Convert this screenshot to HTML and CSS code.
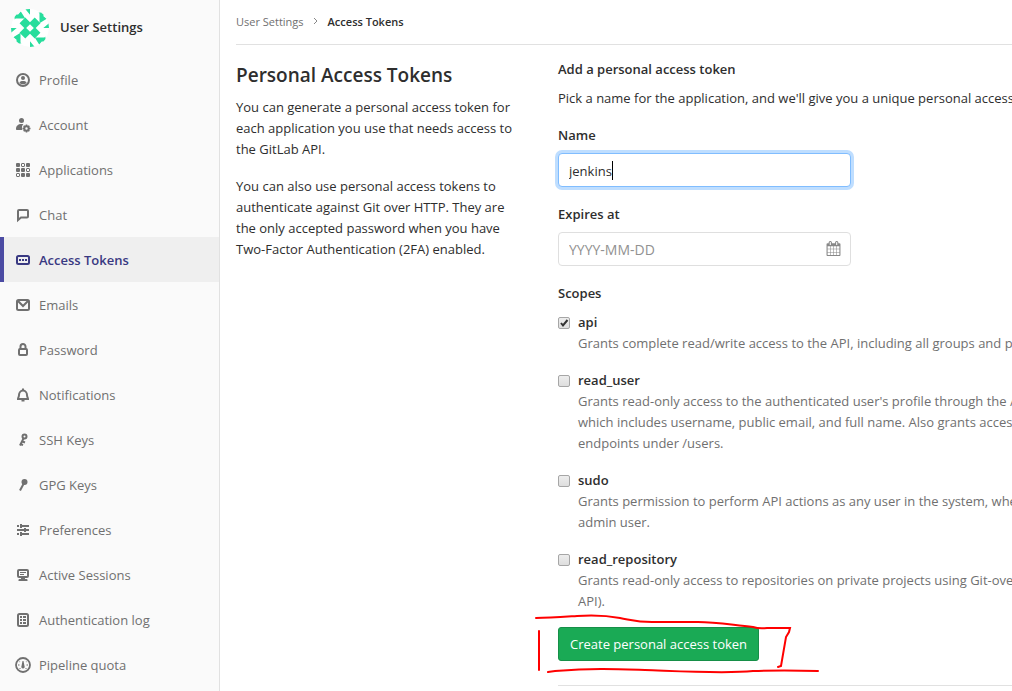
FILE: index.html
```html
<!DOCTYPE html>
<html lang="en">
	<head>
		<meta charset="UTF-8"/>
		<title>Access Tokens · User Settings</title>
		<link rel="stylesheet" href="styles.css">
	</head>
	<body>
		<div class="page">
			<nav class="sidebar">
				<a class="context" href="#">
					<svg class="avatar" viewBox="0 0 40 40" aria-hidden="true">
						<circle cx="20" cy="20" r="20" fill="#fff"/>
						<g fill="#27dd9c">
							<path d="M15 9l5 5 5-5 6 6-5 5 5 5-6 6-5-5-5 5-6-6 5-5-5-5z"/>
							<path d="M20 16l4 4-4 4-4-4z" fill="#fff"/>
							<g id="corner">
								<path d="M4 10l6-7v7zM10 2v8l5 0zM3 5l5 1-4 5zM15 0h5v6z"/>
							</g>
							<use href="#corner" transform="rotate(90 20 20)"/>
							<use href="#corner" transform="rotate(180 20 20)"/>
							<use href="#corner" transform="rotate(270 20 20)"/>
						</g>
					</svg>
					<span>User Settings</span>
				</a>
				<ul class="menu">
					<li><a href="#">
						<svg class="icon" viewBox="0 0 16 16"><circle cx="8" cy="8" r="6" fill="none" stroke="currentColor" stroke-width="2"/><circle cx="8" cy="6" r="2"/><path d="M4.500 11c0-1.500 1.500-2 3.500-2s3.500.5 3.500 2c-1 1-2 1.300-3.500 1.300S5.500 12 4.500 11z"/></svg>
						<span>Profile</span></a></li>
					<li><a href="#">
						<svg class="icon" viewBox="0 0 16 16"><circle cx="6.500" cy="3.500" r="2.500"/><path d="M1 12c0-3 2-5 5.500-5 .7 0 1.300.1 1.900.3C7 8.500 6.500 10.500 7.300 13H2c-.6 0-1-.4-1-1z"/><circle cx="11.500" cy="11.500" r="2.200" fill="none" stroke="currentColor" stroke-width="2"/><path d="M11.500 7.500v1.500M11.500 14v1.500M7.500 11.500H9M14 11.500h1.500M8.700 8.700l1 1M13.300 13.300l1 1M8.700 14.300l1-1M13.300 9.700l1-1" stroke="currentColor" stroke-width="1.600"/></svg>
						<span>Account</span></a></li>
					<li><a href="#">
						<svg class="icon" viewBox="0 0 16 16"><rect x="1" y="1" width="4" height="4" rx="1"/><rect x="11" y="1" width="4" height="4" rx="1"/><rect x="1" y="6" width="4" height="4" rx="1"/><rect x="6" y="6" width="4" height="4" rx="1"/><rect x="6" y="11" width="4" height="4" rx="1"/><rect x="11" y="11" width="4" height="4" rx="1"/><g fill="none" stroke="currentColor"><rect x="6.500" y="1.500" width="3" height="3" rx=".5"/><rect x="11.500" y="6.500" width="3" height="3" rx=".5"/><rect x="1.500" y="11.500" width="3" height="3" rx=".5"/></g></svg>
						<span>Applications</span></a></li>
					<li><a href="#">
						<svg class="icon line" viewBox="0 0 16 16"><path d="M3 13V4a1 1 0 0 1 1-1h8a1 1 0 0 1 1 1v5.500a1 1 0 0 1-1 1H6z"/></svg>
						<span>Chat</span></a></li>
					<li class="active"><a href="#">
						<svg class="icon" viewBox="0 0 16 16"><rect x="2" y="4" width="12" height="8" rx="1.500" fill="none" stroke="currentColor" stroke-width="2"/><path d="M4 7h2v2H4zM7 7h2v2H7zM10 7h2v2h-2z"/></svg>
						<span>Access Tokens</span></a></li>
					<li><a href="#">
						<svg class="icon line" viewBox="0 0 16 16"><rect x="2" y="3" width="12" height="10" rx="1.500"/><path d="M3 4l5 5 5-5"/></svg>
						<span>Emails</span></a></li>
					<li><a href="#">
						<svg class="icon line" viewBox="0 0 16 16"><rect x="4" y="7" width="8" height="6" rx="1"/><path d="M5.500 7V4.500a2.500 2.500 0 0 1 5 0V7"/></svg>
						<span>Password</span></a></li>
					<li><a href="#">
						<svg class="icon line" viewBox="0 0 16 16"><path d="M3 12c0-1.500 1-2 1-4s1.500-4.500 4-4.500S12 6 12 8s1 2.500 1 4z"/><path d="M7 2.500h2M6.500 13.500h3"/></svg>
						<span>Notifications</span></a></li>
					<li><a href="#">
						<svg class="icon" viewBox="0 0 16 16"><circle cx="9.500" cy="4.500" r="2" fill="none" stroke="currentColor" stroke-width="2"/><path d="M8.500 6.500L5 13.500M7.500 9.500l2.500 1M5.500 12l2.500 1.200" fill="none" stroke="currentColor" stroke-width="2"/></svg>
						<span>SSH Keys</span></a></li>
					<li><a href="#">
						<svg class="icon" viewBox="0 0 16 16"><circle cx="9.500" cy="5" r="3"/><path d="M9 6L5 13.500" stroke="currentColor" stroke-width="2"/></svg>
						<span>GPG Keys</span></a></li>
					<li><a href="#">
						<svg class="icon" viewBox="0 0 16 16"><path d="M2 3h2v2H2zM5 2h2v1h7v2H7v1H5zM2 7h7V6h2v1h3v2h-3v1H9V9H2zM2 11h2v2H2zM5 10h2v1h7v2H7v1H5z"/></svg>
						<span>Preferences</span></a></li>
					<li><a href="#">
						<svg class="icon" viewBox="0 0 16 16"><rect x="3" y="3" width="10" height="7" rx="1" fill="none" stroke="currentColor" stroke-width="2"/><path d="M5 5h6v1H5zM5 7h4v1H5zM6 10h4v2h1.500a1 1 0 0 1 1 1v1h-9v-1a1 1 0 0 1 1-1H6z"/></svg>
						<span>Active Sessions</span></a></li>
					<li><a href="#">
						<svg class="icon" viewBox="0 0 16 16"><rect x="3" y="2" width="10" height="12" rx="1.500" fill="none" stroke="currentColor" stroke-width="2"/><path d="M5 4h2v2H5zM8 4h3v2H8zM5 7h2v2H5zM8 7h3v2H8zM5 10h2v2H5zM8 10h3v2H8z"/></svg>
						<span>Authentication log</span></a></li>
					<li><a href="#">
						<svg class="icon" viewBox="0 0 16 16"><circle cx="8" cy="8" r="7" fill="none" stroke="currentColor" stroke-width="1.800"/><path d="M7.500 4h1l1 5a1.700 1.700 0 1 1-3 0zM3 7.500h1.500v1H3zM11.500 7.500H13v1h-1.500zM4.300 4.300l1 .3-.6.8zM11.700 4.300l-1 .3.6.8zM4.500 11h1v1h-1zM10.500 11h1v1h-1z"/></svg>
						<span>Pipeline quota</span></a></li>
				</ul>
			</nav>
			<main class="content">
				<div class="breadcrumbs">
					<a href="#">User Settings</a>
					<svg viewBox="0 0 8 8" aria-hidden="true"><path d="M2 1l3 3-3 3"/></svg>
					<a class="current" href="#">Access Tokens</a>
				</div>
				<div class="row">
					<section class="intro">
						<h1>Personal Access Tokens</h1>
						<p>You can generate a personal access token for each application you use that needs access to the GitLab API.</p>
						<p>You can also use personal access tokens to authenticate against Git over HTTP. They are the only accepted password when you have Two-Factor Authentication (2FA) enabled.</p>
					</section>
					<form class="token-form">
						<h2>Add a personal access token</h2>
						<p>Pick a name for the application, and we'll give you a unique personal access token.</p>
						<div class="form-group">
							<label for="name">Name</label>
							<div class="field">
								<input class="form-control focused" id="name" type="text" value="jenkins">
								<span class="caret"></span>
							</div>
						</div>
						<div class="form-group">
							<label for="expires">Expires at</label>
							<div class="field">
								<input class="form-control" id="expires" type="text" placeholder="YYYY-MM-DD">
								<svg class="calendar" viewBox="0 0 1792 1792" aria-hidden="true"><path d="M192 1664h288v-288h-288v288zm352 0h320v-288h-320v288zm-352-352h288v-320h-288v320zm352 0h320v-320h-320v320zm-352-384h288v-288h-288v288zm736 736h320v-288h-320v288zm-384-736h320v-288h-320v288zm768 736h288v-288h-288v288zm-384-352h320v-320h-320v320zm-352-864v-288q0-13-9.500-22.500t-22.500-9.500h-64q-13 0-22.500 9.500t-9.500 22.500v288q0 13 9.500 22.500t22.500 9.500h64q13 0 22.500-9.500t9.500-22.500zm736 864h288v-320h-288v320zm-384-384h320v-288h-320v288zm384 0h288v-288h-288v288zm32-480v-288q0-13-9.500-22.500t-22.500-9.500h-64q-13 0-22.500 9.500t-9.500 22.500v288q0 13 9.500 22.500t22.500 9.500h64q13 0 22.500-9.500t9.500-22.500zm384-64v1280q0 52-38 90t-90 38h-1408q-52 0-90-38t-38-90v-1280q0-52 38-90t90-38h128v-96q0-66 47-113t113-47h64q66 0 113 47t47 113v96h384v-96q0-66 47-113t113-47h64q66 0 113 47t47 113v96h128q52 0 90 38t38 90z"/></svg>
							</div>
						</div>
						<fieldset class="scopes">
							<legend>Scopes</legend>
							<div class="scope">
								<input id="api" type="checkbox" checked>
								<label for="api">api</label>
								<p>Grants complete read/write access to the API, including all groups and projects.</p>
							</div>
							<div class="scope">
								<input id="read_user" type="checkbox">
								<label for="read_user">read_user</label>
								<p>Grants read-only access to the authenticated user's profile through the /user API endpoint, which includes username, public email, and full name. Also grants access to read-only API endpoints under /users.</p>
							</div>
							<div class="scope">
								<input id="sudo" type="checkbox">
								<label for="sudo">sudo</label>
								<p>Grants permission to perform API actions as any user in the system, when authenticated as an admin user.</p>
							</div>
							<div class="scope">
								<input id="read_repository" type="checkbox">
								<label for="read_repository">read_repository</label>
								<p>Grants read-only access to repositories on private projects using Git-over-HTTP (not using the API).</p>
							</div>
						</fieldset>
						<div class="actions">
							<button type="button">Create personal access token</button>
							<svg class="marker" viewBox="0 0 290 64" aria-hidden="true">
								<path d="M2 6C15 6 28 5 43 4S70 3 86 6s18 4 32 4h46c18 0 34 3 55 5q6 2 14 1l23 0-1 4-3 5-5 29-3 1M5 19v39M14 60l7-1c40-3 60-2 90-1s80 4 108 1q30-1 65 0"/>
							</svg>
						</div>
						<hr>
					</form>
				</div>
			</main>
		</div>
	</body>
</html>
```
FILE: styles.css
```css
* {
	box-sizing: border-box;
}
body {
	margin: 0;
	overflow: hidden;
	background: #fff;
	color: #2e2e2e;
	font: 13px/21px "Segoe UI", "Open Sans", "Noto Sans", sans-serif;
}
a {
	color: inherit;
	text-decoration: none;
}
h1, h2, p {
	margin: 0;
}
.page {
	display: flex;
	min-height: 100vh;
}

/* sidebar */
.sidebar {
	flex: 0 0 220px;
	background: #fafafa;
	border-right: 1px solid #e1e1e1;
}
.context {
	display: flex;
	align-items: center;
	gap: 11px;
	height: 57px;
	padding: 0 11px 2px;
	font-weight: 600;
}
.avatar {
	width: 38px;
	height: 38px;
	border-radius: 50%;
}
.menu {
	margin: 0;
	padding: 0;
	list-style: none;
}
.menu a {
	display: flex;
	align-items: center;
	gap: 8px;
	height: 45px;
	padding-top: 1px;
	padding-left: 15px;
	color: #707070;
}
.menu .active a {
	padding-left: 11px;
	border-left: 4px solid #4b4ba3;
	background: #efefef;
	color: #393982;
	font-weight: 600;
}
.icon {
	width: 16px;
	height: 16px;
	fill: currentColor;
}
.icon.line {
	fill: none;
	stroke: currentColor;
	stroke-width: 2;
}

/* content */
.content {
	flex: 1;
	min-width: 0;
	padding-left: 16px;
}
.breadcrumbs {
	display: flex;
	align-items: center;
	gap: 8px;
	height: 45px;
	padding-bottom: 2px;
	border-bottom: 1px solid #e1e1e1;
	color: #707070;
	font-size: 11px;
}
.breadcrumbs svg {
	width: 8px;
	height: 8px;
	fill: none;
	stroke: #888;
}
.breadcrumbs .current {
	color: #2e2e2e;
	font-weight: 600;
}
.row {
	display: grid;
	grid-template-columns: minmax(290px, 1fr) minmax(596px, 2fr);
	gap: 32px;
}
.intro {
	padding-top: 18px;
}
.intro h1 {
	margin-bottom: 10px;
	font-size: 19px;
	line-height: 24px;
	font-weight: 600;
}
.intro p {
	margin-bottom: 16px;
}

/* form */
.token-form {
	padding-top: 14px;
}
.token-form h2 {
	margin-bottom: 8px;
	font-size: 13px;
	font-weight: 600;
}
.token-form > p {
	margin-bottom: 16px;
}
.form-group {
	margin-bottom: 17px;
}
.form-group label {
	display: block;
	margin-bottom: 7px;
	font-weight: 600;
}
.field {
	position: relative;
	max-width: 293px;
}
.form-control {
	display: block;
	width: 100%;
	height: 34px;
	padding: 7px 10px 5px;
	border: 1px solid #dfdfdf;
	border-radius: 4px;
	background: #fff;
	color: #2e2e2e;
	font: inherit;
}
.form-control::placeholder {
	color: #919191;
	font-size: 14px;
}
.form-control.focused {
	border-color: #80bdff;
	outline: 0;
	box-shadow: 0 0 0 3px #bfdeff;
}
.caret {
	position: absolute;
	top: 8px;
	left: 54px;
	width: 1px;
	height: 19px;
	background: #000;
}
.calendar {
	position: absolute;
	top: 9px;
	right: 10px;
	width: 15px;
	height: 15px;
	fill: #888;
}
.scopes {
	margin: 0;
	padding: 0;
	border: 0;
}
.scopes legend {
	margin-bottom: 8px;
	padding: 0;
	font-weight: 600;
}
.scope {
	display: grid;
	grid-template-columns: 12px 1fr;
	column-gap: 8px;
	align-items: center;
	margin-bottom: 16px;
}
.scope:last-child {
	margin-bottom: 15px;
}
.scope input {
	appearance: none;
	width: 12px;
	height: 12px;
	margin: 0;
	border: 1px solid #a6a6a6;
	border-radius: 2px;
	background: linear-gradient(#ededed, #dedede);
}
.scope input:checked {
	background: url("data:image/svg+xml,%3Csvg xmlns='http://www.w3.org/2000/svg' viewBox='0 0 10 10'%3E%3Cpath d='M2 5l2 2.500L8.500 2' fill='none' stroke='%23333' stroke-width='2'/%3E%3C/svg%3E"), linear-gradient(#ededed, #dedede);
}
.scope label {
	font-weight: 600;
}
.scope p {
	grid-column: 2;
	color: #707070;
}
.actions {
	position: relative;
}
.actions button {
	height: 34px;
	padding: 0 11px;
	border: 1px solid #168f48;
	border-radius: 3px;
	background: #1aaa55;
	color: #fff;
	font: inherit;
}
.marker {
	position: absolute;
	top: -15px;
	left: -24px;
	width: 290px;
	height: 64px;
	fill: none;
	stroke: #f00;
	stroke-width: 2;
	stroke-linecap: round;
	pointer-events: none;
}
hr {
	margin: 24px 0 0;
	border: 0;
	border-top: 1px solid #e1e1e1;
}
```
